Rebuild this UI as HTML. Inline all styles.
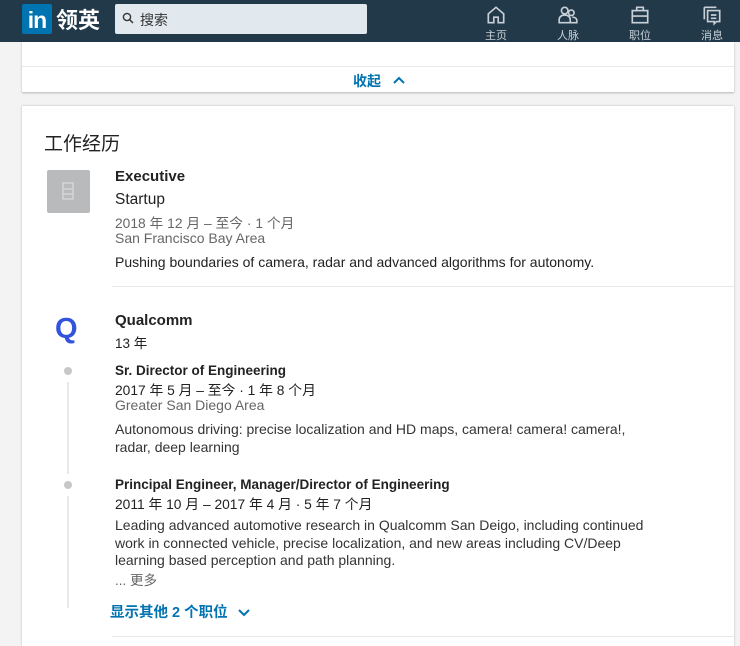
<!DOCTYPE html><html><head><meta charset="utf-8"><style>
*{margin:0;padding:0;box-sizing:border-box}
body{width:740px;height:641px;overflow:hidden;background:#f3f3f3;font-family:"Liberation Sans","Noto Sans CJK SC",sans-serif;color:#000;position:relative}
.a{position:absolute;white-space:nowrap}
.hdr{position:absolute;left:0;top:0;width:740px;height:42px;background:#22394a}
.g{color:#666}
.b{font-weight:bold}
.nav{position:absolute;top:4px;width:40px;text-align:center;color:#c8d0d6;font-size:11px}
.nav svg{display:block;margin:0 auto 1px}
</style></head><body>
<div class="hdr">
<div class="a" style="left:22px;top:4px;width:30px;height:30px;background:#0073b1;border-radius:2px;color:#fff;font-weight:bold;font-size:23px;line-height:32px;text-align:center;letter-spacing:-1px">in</div>
<div class="a" style="left:56px;top:3px;color:#fff;font-size:22px;font-weight:bold">领英</div>
<div class="a" style="left:115px;top:4px;width:252px;height:30px;background:#e1e9ee;border-radius:2px"></div>
<svg class="a" style="left:122px;top:12px" width="12" height="12" viewBox="0 0 12 12"><circle cx="5" cy="5" r="3.6" fill="none" stroke="#333" stroke-width="1.4"/><path d="M7.6 7.6L11 11" stroke="#333" stroke-width="1.5"/></svg>
<div class="a" style="left:140px;top:10px;font-size:14px;color:#333">搜索</div>
<div class="nav" style="left:476px"><svg width="22" height="22" viewBox="0 0 20 20" fill="none" stroke="#c8d0d6" stroke-width="1.5"><path d="M3 9L10 3l7 6v8h-5v-5H8v5H3z"/></svg>主页</div>
<div class="nav" style="left:548px"><svg width="22" height="22" viewBox="0 0 20 20" fill="none" stroke="#c8d0d6" stroke-width="1.5"><circle cx="7" cy="6" r="3"/><circle cx="13" cy="8" r="2.5"/><path d="M2 17v-3c0-2 2-4 5-4s5 2 5 4v3zM12 17h6v-2c0-2-2-3-4-3"/></svg>人脉</div>
<div class="nav" style="left:620px"><svg width="22" height="22" viewBox="0 0 20 20" fill="none" stroke="#c8d0d6" stroke-width="1.5"><rect x="3" y="6" width="14" height="11"/><path d="M7 6V3h6v3M3 11h14"/></svg>职位</div>
<div class="nav" style="left:692px"><svg width="22" height="22" viewBox="0 0 20 20" fill="none" stroke="#c8d0d6" stroke-width="1.5"><path d="M3 3h11M3 3v11M6 6h11v10h-3l-2 2v-2H6zM9 10h5M9 13h5"/></svg>消息</div>
</div>
<div class="a" style="left:22px;top:42px;width:712px;height:50px;background:#fff;box-shadow:0 1px 2px rgba(0,0,0,.25)"></div>
<div class="a" style="left:22px;top:66px;width:712px;height:1px;background:#e6e9ec"></div>
<div class="a b" style="left:353px;top:71px;font-size:14px;color:#0073b1">收起</div>
<svg class="a" style="left:392px;top:75px" width="14" height="10" viewBox="0 0 14 10"><path d="M2 8L7 3l5 5" fill="none" stroke="#0073b1" stroke-width="2"/></svg>
<div class="a" style="left:22px;top:106px;width:712px;height:540px;background:#fff;box-shadow:0 0 2px rgba(0,0,0,.25)"></div>
<div class="a" style="left:44px;top:129px;font-size:19px;color:#222">工作经历</div>
<div class="a" style="left:47px;top:170px;width:43px;height:43px;background:#b8babb;border-radius:2px"></div>
<svg class="a" style="left:61px;top:181px" width="14" height="20" viewBox="0 0 14 20" fill="none" stroke="#d9dadb" stroke-width="1.3"><rect x="2" y="2" width="10" height="16"/><path d="M2 8h10M2 13h10"/></svg>
<div class="a" style="left:115px;top:168px;font-size:15px;font-weight:bold;color:#222">Executive</div>
<div class="a" style="left:115px;top:191px;font-size:15.5px;color:#222">Startup</div>
<div class="a g" style="left:115px;top:212px;font-size:13.8px">2018 年 12 月 – 至今 · 1 个月</div>
<div class="a g" style="left:115px;top:230px;font-size:14px">San Francisco Bay Area</div>
<div class="a" style="left:115px;top:254px;font-size:14px;color:#222">Pushing boundaries of camera, radar and advanced algorithms for autonomy.</div>
<div class="a" style="left:112px;top:286px;width:622px;height:1px;background:#e6e9ec"></div>
<div class="a" style="left:55px;top:313px;font-size:29px;font-weight:bold;color:#3253dc">Q</div>
<div class="a" style="left:115px;top:312px;font-size:15px;font-weight:bold;color:#222">Qualcomm</div>
<div class="a" style="left:115px;top:332px;font-size:13.5px;color:#222">13 年</div>
<div class="a" style="left:67px;top:382px;width:2px;height:92px;background:#e6e9ec"></div>
<div class="a" style="left:67px;top:496px;width:2px;height:112px;background:#e6e9ec"></div>
<div class="a" style="left:64px;top:367px;width:8px;height:8px;border-radius:50%;background:#c7c7c7"></div>
<div class="a" style="left:64px;top:481px;width:8px;height:8px;border-radius:50%;background:#c7c7c7"></div>
<div class="a b" style="left:115px;top:363px;font-size:13.5px;color:#222">Sr. Director of Engineering</div>
<div class="a" style="left:115px;top:379px;font-size:13.8px;color:#222">2017 年 5 月 – 至今 · 1 年 8 个月</div>
<div class="a g" style="left:115px;top:397px;font-size:14px">Greater San Diego Area</div>
<div class="a" style="left:115px;top:421px;font-size:14px;color:#333;line-height:17.5px">Autonomous driving: precise localization and HD maps, camera! camera! camera!,<br>radar, deep learning</div>
<div class="a b" style="left:115px;top:477px;font-size:13.5px;color:#222">Principal Engineer, Manager/Director of Engineering</div>
<div class="a" style="left:115px;top:493px;font-size:13.8px;color:#222">2011 年 10 月 – 2017 年 4 月 · 5 年 7 个月</div>
<div class="a" style="left:115px;top:517px;font-size:14px;color:#333;line-height:17.5px">Leading advanced automotive research in Qualcomm San Deigo, including continued<br>work in connected vehicle, precise localization, and new areas including CV/Deep<br>learning based perception and path planning.</div>
<div class="a g" style="left:115px;top:569px;font-size:13.5px">... 更多</div>
<div class="a b" style="left:110px;top:601px;font-size:14.5px;color:#0073b1">显示其他 2 个职位</div>
<svg class="a" style="left:237px;top:607px" width="14" height="10" viewBox="0 0 14 10"><path d="M2 3l5 5 5-5" fill="none" stroke="#0073b1" stroke-width="2"/></svg>
<div class="a" style="left:112px;top:636px;width:622px;height:1px;background:#e6e9ec"></div>
</body></html>
